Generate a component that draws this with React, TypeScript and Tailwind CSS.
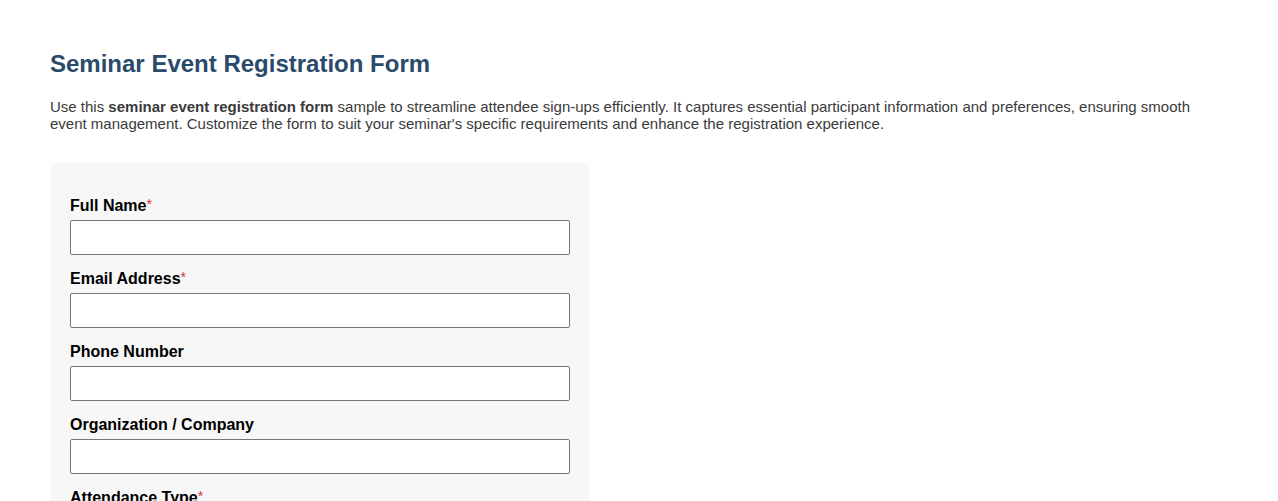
export default function App() {
    const fields = [
        { label: 'Full Name', required: true },
        { label: 'Email Address', required: true },
        { label: 'Phone Number', required: false },
        { label: 'Organization / Company', required: false },
    ];

    return (
        <div className="min-h-screen bg-white px-[50px] pt-[50px] font-['Liberation_Sans',Arial,sans-serif] text-[#333]">
            {/* Header */}
            <h1 className="text-[24px] leading-[28px] font-bold text-[#2a4a6b]">Seminar Event Registration Form</h1>
            <p className="mt-[20px] text-[15px] leading-[17px] text-[#3a3a3a]">
                Use this <strong className="font-bold">seminar event registration form</strong> sample to streamline attendee sign-ups
                efficiently. It captures essential participant information and preferences, ensuring smooth event management.
                Customize the form to suit your seminar's specific requirements and enhance the registration experience.
            </p>

            {/* Form card */}
            <form className="mt-[30px] w-[540px] rounded-lg bg-[#f7f7f7] px-5 pt-[34px] pb-6">
                {fields.map((f) => (
                    <div key={f.label} className="mb-[14px]">
                        <label className="block h-[18px] text-[16px] leading-[20px] font-bold text-black">
                            {f.label}
                            {f.required && <span className="align-top text-[14px] leading-[16px] font-normal text-[#dc2b3f]">*</span>}
                        </label>
                        <input
                            type="text"
                            className="mt-[6px] block h-[35px] w-full rounded-[2px] border border-[#767676] bg-white px-2 text-[15px]"
                        />
                    </div>
                ))}
                <div>
                    <label className="block h-[18px] text-[16px] leading-[20px] font-bold text-black">
                        Attendance Type<span className="align-top text-[14px] leading-[16px] font-normal text-[#dc2b3f]">*</span>
                    </label>
                </div>
            </form>
        </div>
    );
}
